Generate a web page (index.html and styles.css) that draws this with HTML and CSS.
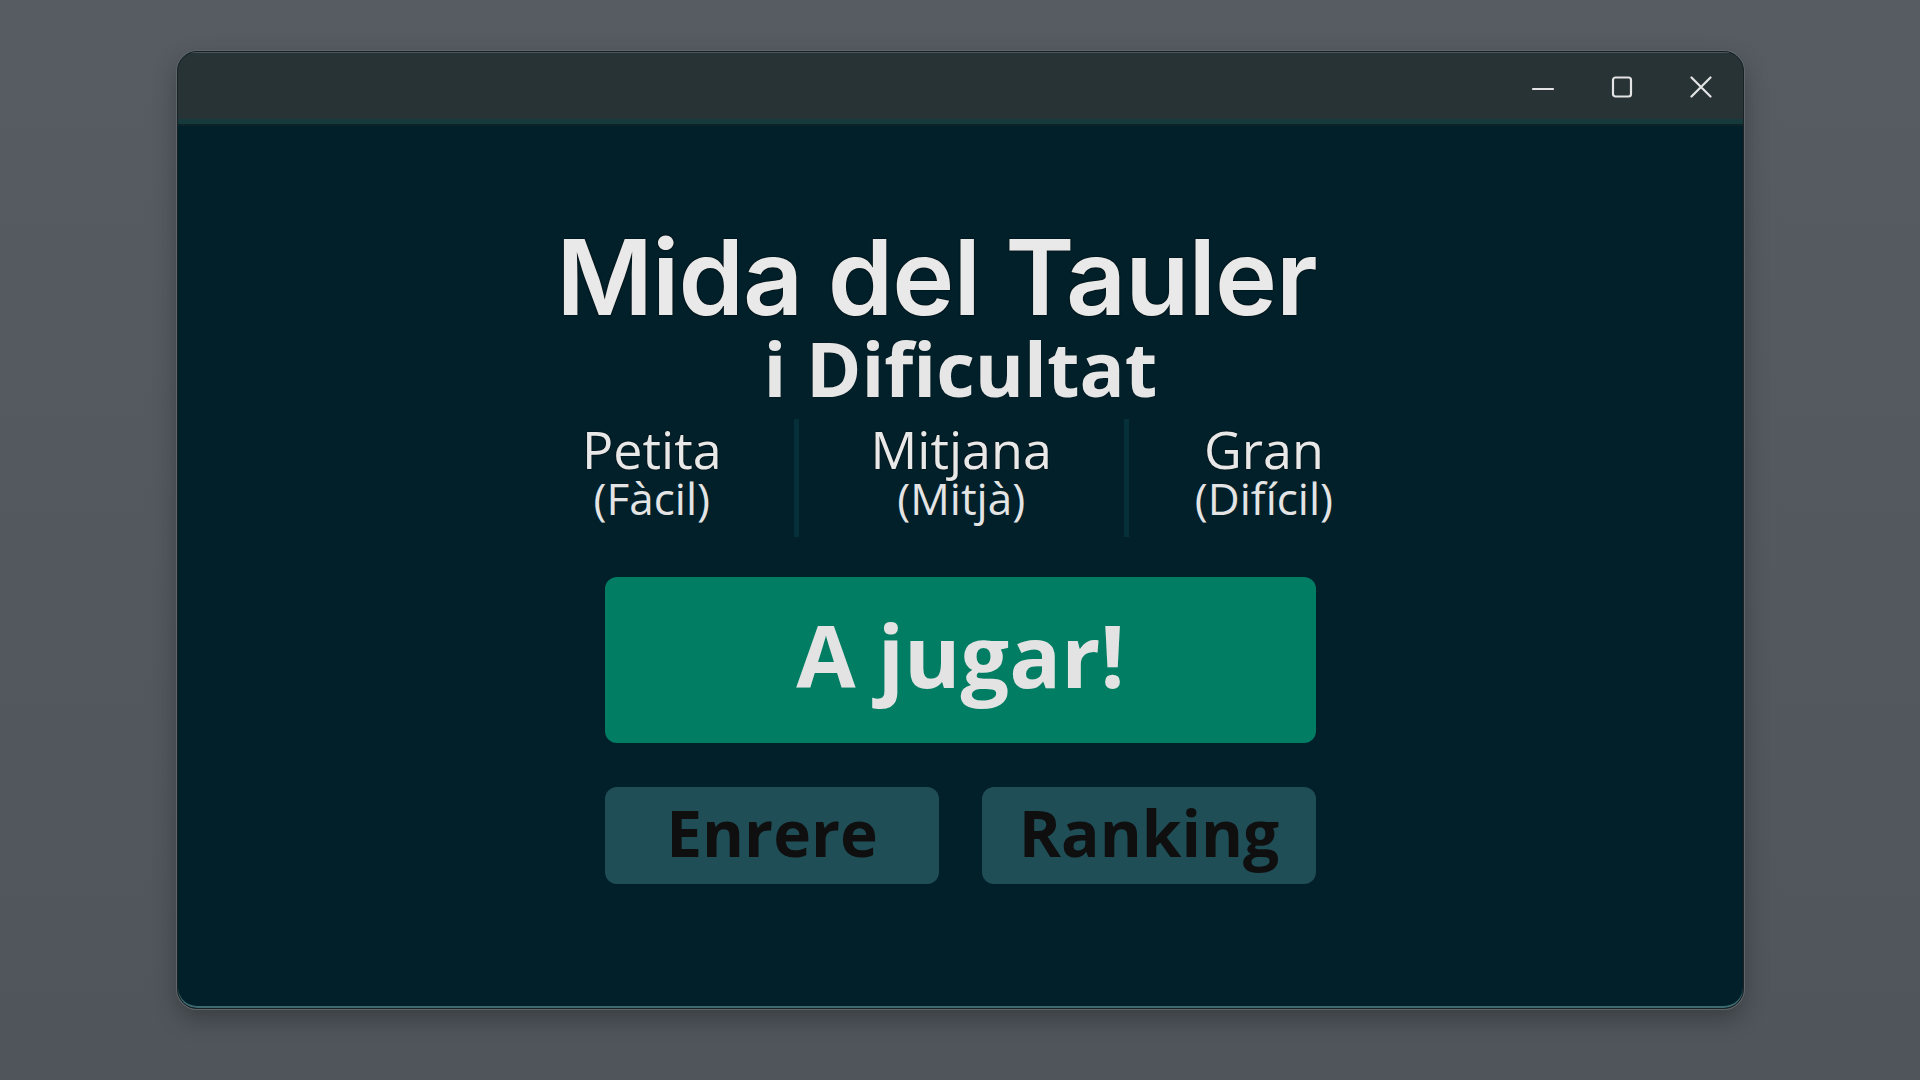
FILE: index.html
```html
<!DOCTYPE html>
<html lang="ca">
<head>
<meta charset="utf-8">
<title>Mida del Tauler i Dificultat</title>
<link rel="stylesheet" href="styles.css">
</head>
<body>
<div class="desktop">
  <div class="window">
    <div class="titlebar">
      <div class="controls">
        <span class="ctl">
          <svg width="22" height="22" viewBox="0 0 22 22"><path d="M1 13H21" stroke="#e4e4e4" stroke-width="2.2" stroke-linecap="round"/></svg>
        </span>
        <span class="ctl">
          <svg width="22" height="22" viewBox="0 0 22 22"><rect x="2" y="1.5" width="18" height="19" rx="2.5" fill="none" stroke="#e4e4e4" stroke-width="2.2"/></svg>
        </span>
        <span class="ctl">
          <svg width="22" height="22" viewBox="0 0 22 22"><path d="M1.5 1.5L20.5 20.5M20.5 1.5L1.5 20.5" stroke="#e4e4e4" stroke-width="2.2" stroke-linecap="round"/></svg>
        </span>
      </div>
    </div>
    <div class="strip"></div>
    <main class="content">
      <h1 class="title">Mida del Tauler</h1>
      <h2 class="subtitle">i Dificultat</h2>
      <div class="options">
        <div class="option">
          <span class="opt-name">Petita</span>
          <span class="opt-level">(Fàcil)</span>
        </div>
        <div class="option">
          <span class="opt-name">Mitjana</span>
          <span class="opt-level">(Mitjà)</span>
        </div>
        <div class="option option-last">
          <span class="opt-name">Gran</span>
          <span class="opt-level">(Difícil)</span>
        </div>
      </div>
      <button class="btn-play">A jugar!</button>
      <div class="btn-row">
        <button class="btn-sec">Enrere</button>
        <button class="btn-sec">Ranking</button>
      </div>
    </main>
  </div>
</div>
</body>
</html>
```
FILE: styles.css
```css
* { box-sizing: border-box; }
html, body { margin: 0; padding: 0; }
body {
  width: 1920px;
  height: 1080px;
  background: #52585e;
  overflow: hidden;
  font-family: "Open Sans", "Noto Sans", sans-serif;
}
.desktop {
  width: 1920px;
  height: 1080px;
  padding: 51px 176px 0 177px;
  background: linear-gradient(180deg, #565c62 0%, #4f555b 100%);
}
.window {
  width: 1567px;
  height: 958px;
  border-radius: 20px;
  overflow: hidden;
  background: #01202a;
  display: flex;
  flex-direction: column;
  border: 1px solid #1a2124;
  box-shadow: 0 0 0 1px #5d666b, 0 10px 24px rgba(0,0,0,0.28), inset 0 -2px 0 #3d6a6f;
}
.titlebar {
  height: 67px;
  background: #283336;
  border-top: 1px solid #49555a;
  display: flex;
  justify-content: flex-end;
  align-items: flex-start;
  flex: none;
}
.controls {
  display: flex;
  gap: 57px;
  padding: 23px 31px 0 0;
}
.ctl { width: 22px; height: 22px; display: block; }
.ctl svg { display: block; }
.strip {
  height: 7px;
  flex: none;
  background: #163a3c;
  border-bottom: 2px solid #0c2329;
}
.content {
  flex: 1;
  display: flex;
  flex-direction: column;
  align-items: center;
  padding-top: 98px;
}
.title {
  margin: 0;
  padding-right: 48px;
  font-family: "Inter", "Noto Sans", sans-serif;
  font-weight: 600;
  font-size: 105px;
  line-height: 106px;
  letter-spacing: -1px;
  color: #e9e9e9;
  text-shadow: 0 0 1px #000, 0 0 2px rgba(0,0,0,0.6);
}
.subtitle {
  margin: 0;
  font-weight: 700;
  font-size: 75px;
  line-height: 76px;
  color: #e6e6e6;
  text-shadow: 0 0 1px rgba(0,0,0,0.6);
}
.options {
  display: flex;
  margin-top: 13px;
  padding-right: 6px;
}
.option {
  display: flex;
  flex-direction: column;
  align-items: center;
  padding: 4px 72px 16px;
  color: #e8e8e8;
}
.option + .option { border-left: 5px solid #05303a; }
.option-last { padding-left: 66px; }
.opt-name {
  font-size: 52px;
  line-height: 52px;
  text-shadow: 0 0 1px #000, 0 0 1px #000;
}
.opt-level {
  font-size: 44px;
  line-height: 46px;
  color: #e4e4e4;
}
.btn-play {
  margin-top: 40px;
  width: 711px;
  height: 166px;
  border: none;
  border-radius: 12px;
  background: #007d62;
  color: #e3e3e3;
  font-family: "Open Sans", "Noto Sans", sans-serif;
  font-weight: 700;
  font-size: 86px;
  line-height: 1;
  padding: 0 0 10px;
}
.btn-row {
  display: flex;
  gap: 43px;
  margin-top: 44px;
}
.btn-sec {
  width: 334px;
  height: 97px;
  border: none;
  border-radius: 12px;
  background: #204e57;
  color: #0f0f10;
  font-family: "Open Sans", "Noto Sans", sans-serif;
  font-weight: 700;
  font-size: 64px;
  line-height: 1;
  padding: 0 0 6px;
}
```
